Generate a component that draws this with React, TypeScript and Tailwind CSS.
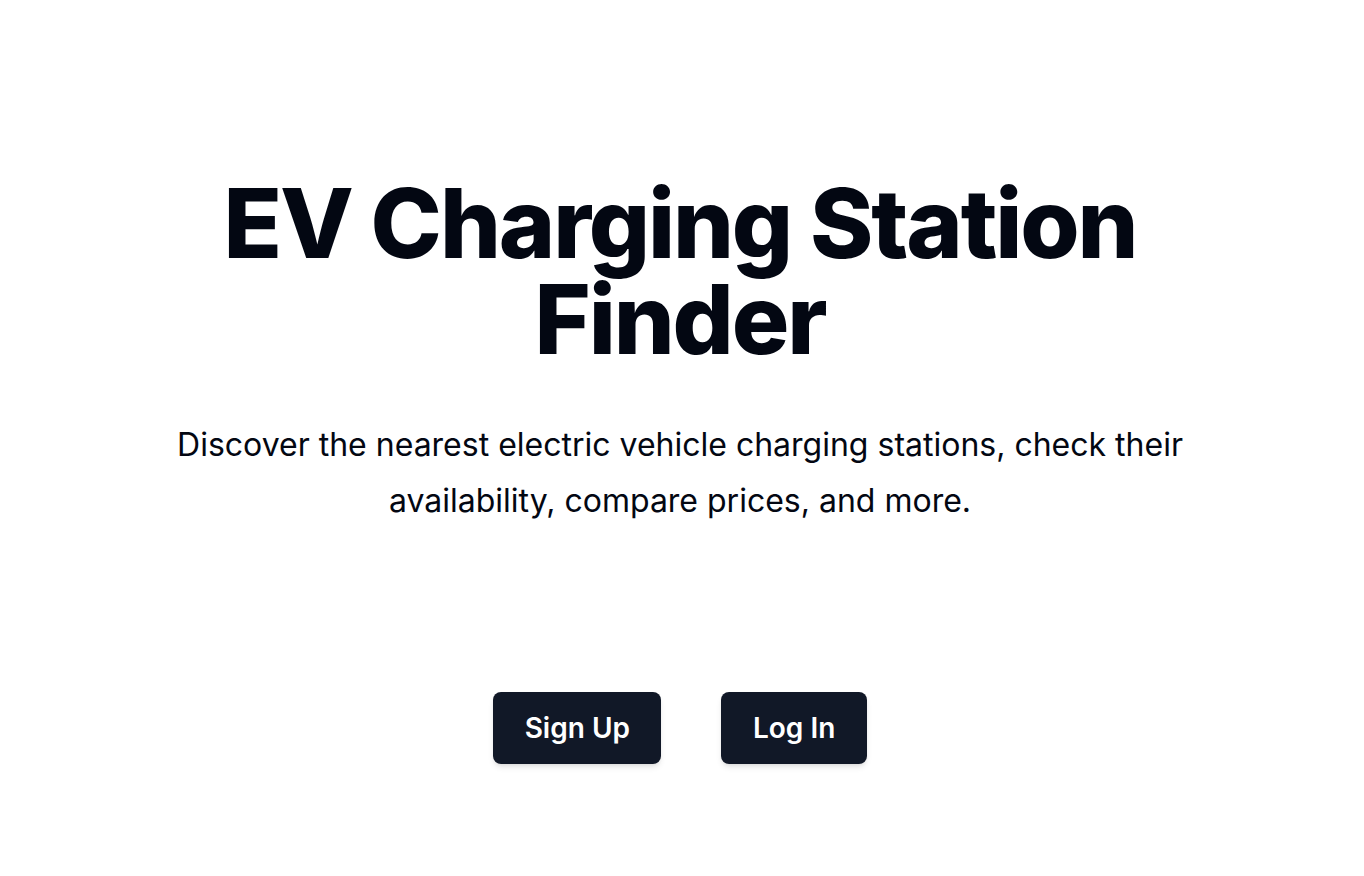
export default function App() {
    return (
        <div className="min-h-screen bg-white flex flex-col items-center pt-[175px] pr-1 font-['Inter',sans-serif]">
            <h1 className="max-w-[1000px] text-center text-8xl font-extrabold leading-none tracking-[-0.022em] text-[#030712]">
                EV Charging Station Finder
            </h1>
            <p className="mt-[50px] max-w-[1060px] text-center text-[32px] leading-[56px] text-[#030712]">
                Discover the nearest electric vehicle charging stations, check their availability, compare prices, and more.
            </p>
            <div className="mt-[163px] flex gap-[60px]">
                <button className="h-[72px] px-[31.5px] rounded-lg bg-[#111827] text-white text-[28px] font-semibold shadow-md">
                    Sign Up
                </button>
                <button className="h-[72px] px-[31.5px] rounded-lg bg-[#111827] text-white text-[28px] font-semibold shadow-md">
                    Log In
                </button>
            </div>
        </div>
    );
}
